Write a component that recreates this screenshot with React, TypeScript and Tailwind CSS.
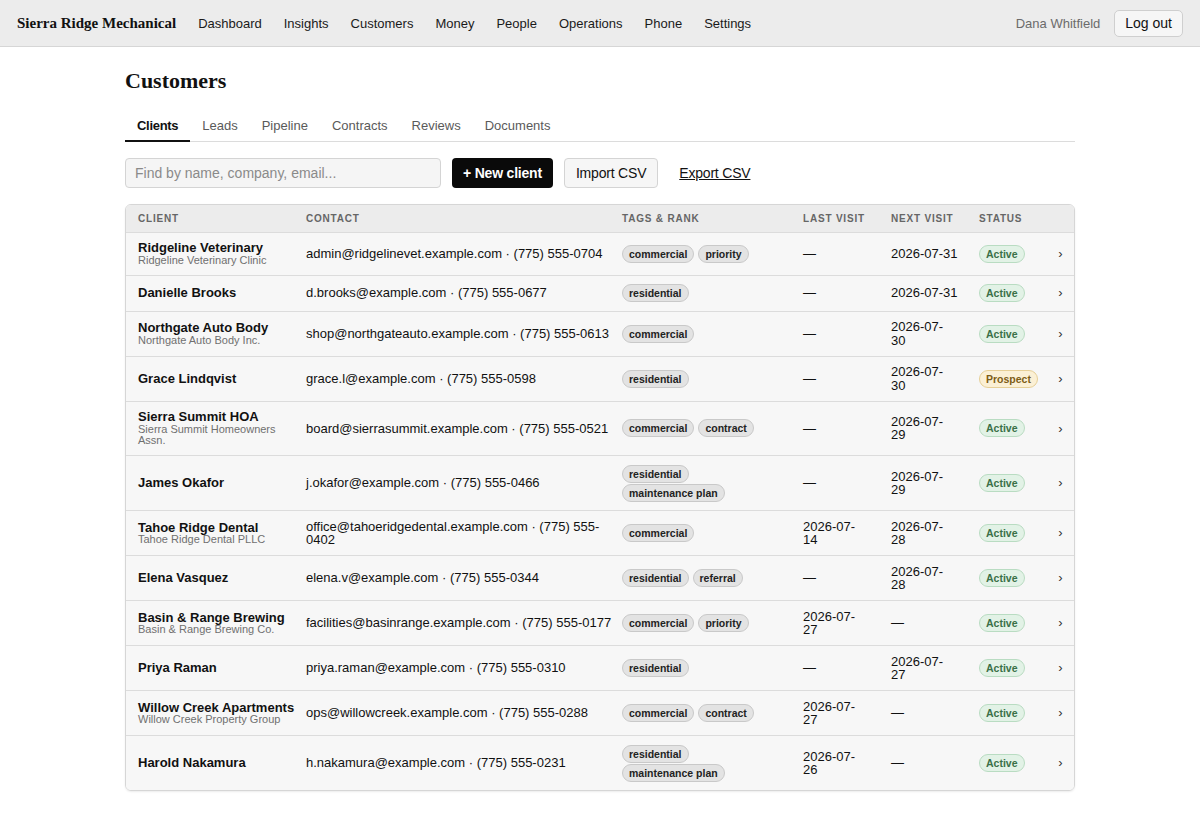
import React from "react";

type Row = {
  name: string;
  company?: string[];
  contact: string[];
  tags: string[];
  last: string[];
  next: string[];
  status: "Active" | "Prospect";
};

const rows: Row[] = [
  { name: "Ridgeline Veterinary", company: ["Ridgeline Veterinary Clinic"], contact: ["admin@ridgelinevet.example.com · (775) 555-0704"], tags: ["commercial", "priority"], last: ["—"], next: ["2026-07-31"], status: "Active" },
  { name: "Danielle Brooks", contact: ["d.brooks@example.com · (775) 555-0677"], tags: ["residential"], last: ["—"], next: ["2026-07-31"], status: "Active" },
  { name: "Northgate Auto Body", company: ["Northgate Auto Body Inc."], contact: ["shop@northgateauto.example.com · (775) 555-0613"], tags: ["commercial"], last: ["—"], next: ["2026-07-", "30"], status: "Active" },
  { name: "Grace Lindqvist", contact: ["grace.l@example.com · (775) 555-0598"], tags: ["residential"], last: ["—"], next: ["2026-07-", "30"], status: "Prospect" },
  { name: "Sierra Summit HOA", company: ["Sierra Summit Homeowners", "Assn."], contact: ["board@sierrasummit.example.com · (775) 555-0521"], tags: ["commercial", "contract"], last: ["—"], next: ["2026-07-", "29"], status: "Active" },
  { name: "James Okafor", contact: ["j.okafor@example.com · (775) 555-0466"], tags: ["residential", "maintenance plan"], last: ["—"], next: ["2026-07-", "29"], status: "Active" },
  { name: "Tahoe Ridge Dental", company: ["Tahoe Ridge Dental PLLC"], contact: ["office@tahoeridgedental.example.com · (775) 555-", "0402"], tags: ["commercial"], last: ["2026-07-", "14"], next: ["2026-07-", "28"], status: "Active" },
  { name: "Elena Vasquez", contact: ["elena.v@example.com · (775) 555-0344"], tags: ["residential", "referral"], last: ["—"], next: ["2026-07-", "28"], status: "Active" },
  { name: "Basin & Range Brewing", company: ["Basin & Range Brewing Co."], contact: ["facilities@basinrange.example.com · (775) 555-0177"], tags: ["commercial", "priority"], last: ["2026-07-", "27"], next: ["—"], status: "Active" },
  { name: "Priya Raman", contact: ["priya.raman@example.com · (775) 555-0310"], tags: ["residential"], last: ["—"], next: ["2026-07-", "27"], status: "Active" },
  { name: "Willow Creek Apartments", company: ["Willow Creek Property Group"], contact: ["ops@willowcreek.example.com · (775) 555-0288"], tags: ["commercial", "contract"], last: ["2026-07-", "27"], next: ["—"], status: "Active" },
  { name: "Harold Nakamura", contact: ["h.nakamura@example.com · (775) 555-0231"], tags: ["residential", "maintenance plan"], last: ["2026-07-", "26"], next: ["—"], status: "Active" },
];

const nav = ["Dashboard", "Insights", "Customers", "Money", "People", "Operations", "Phone", "Settings"];
const tabs = ["Clients", "Leads", "Pipeline", "Contracts", "Reviews", "Documents"];

function Lines({ lines }: { lines: string[] }) {
  return (
    <div className="whitespace-nowrap">
      {lines.map((l, i) => (
        <div key={i}>{l}</div>
      ))}
    </div>
  );
}

export default function App() {
  return (
    <div className="min-h-[838px] bg-white text-[#1a1a1a] font-['Liberation_Sans',Arial,sans-serif]">
      <header className="h-[47px] bg-[#ececec] border-b border-[#d6d6d6] flex items-center pl-[17px] pr-[17px]">
        <div className="font-['Liberation_Serif',Georgia,serif] font-bold text-[15px] text-[#111]">Sierra Ridge Mechanical</div>
        <nav className="ml-[22px] flex items-center gap-[22px] text-[13px] leading-[18px] pt-[2px] text-[#1a1a1a]">
          {nav.map((n) => (
            <span key={n}>{n}</span>
          ))}
        </nav>
        <div className="ml-auto flex items-center gap-[14px]">
          <span className="text-[13px] pt-[2px] text-[#6b6b6b]">Dana Whitfield</span>
          <button className="h-[27px] px-[10px] rounded-[5px] border border-[#cfcfcf] bg-[#f6f6f6] text-[14px] text-[#111]">Log out</button>
        </div>
      </header>

      <main className="w-[950px] mx-auto">
        <h1 className="mt-[20px] font-['Liberation_Serif',Georgia,serif] font-bold text-[22px] leading-[28px] text-[#111]">Customers</h1>

        <div className="mt-[15px] flex border-b border-[#dcdcdc] text-[13px]">
          {tabs.map((t, i) => (
            <div
              key={t}
              className={
                i === 0
                  ? "px-[12px] pt-[8px] pb-[6px] leading-[16px] border-b-2 border-[#111] text-[#111] font-bold tracking-[-0.3px] -mb-px"
                  : "px-[12px] pt-[8px] pb-[6px] leading-[16px] border-b-2 border-transparent text-[#5a5a5a] -mb-px"
              }
            >
              {t}
            </div>
          ))}
        </div>

        <div className="mt-[16px] flex items-center gap-[11px]">
          <input
            className="w-[316px] h-[30px] px-[9px] rounded-[4px] border border-[#d4d4d4] bg-[#f5f5f5] text-[14px] placeholder:text-[#8a8a8a] outline-none"
            placeholder="Find by name, company, email..."
          />
          <button className="h-[30px] px-[11px] rounded-[4px] bg-[#0a0a0a] text-white text-[14px] font-bold tracking-[-0.2px]">+ New client</button>
          <button className="h-[30px] px-[11px] rounded-[4px] border border-[#d4d4d4] bg-[#f6f6f6] text-[14px] text-[#111] tracking-[-0.2px]">Import CSV</button>
          <a className="px-[10px] text-[14px] text-[#111] underline tracking-[-0.2px]">Export CSV</a>
        </div>

        <div className="mt-[16px] border border-[#d6d6d6] rounded-[6px] overflow-hidden shadow-[0_1px_2px_rgba(0,0,0,0.08)]">
          <table className="w-full table-fixed border-collapse text-[13px] leading-[13.5px]">
            <colgroup>
              <col className="w-[168px]" />
              <col className="w-[316px]" />
              <col className="w-[181px]" />
              <col className="w-[88px]" />
              <col className="w-[88px]" />
              <col className="w-[80px]" />
              <col className="w-[27px]" />
            </colgroup>
            <thead>
              <tr className="bg-[#ececec] h-[27px] text-left text-[10px] font-bold tracking-[0.08em] uppercase text-[#666]">
                <th className="px-[12px] font-bold">Client</th>
                <th className="px-[12px] font-bold">Contact</th>
                <th className="px-[12px] font-bold">Tags &amp; Rank</th>
                <th className="px-[12px] font-bold">Last visit</th>
                <th className="px-[12px] font-bold">Next visit</th>
                <th className="px-[12px] font-bold">Status</th>
                <th></th>
              </tr>
            </thead>
            <tbody>
              {rows.map((r) => (
                <tr key={r.name} className="bg-[#f7f7f7] border-t border-[#dcdcdc] align-middle">
                  <td className="pl-[12px] pr-[4px] py-[8.5px]">
                    <div className="font-bold whitespace-nowrap text-[#111]">{r.name}</div>
                    {r.company && (
                      <div className="text-[11px] leading-[11.5px] text-[#707070]">
                        {r.company.map((c, i) => (
                          <div key={i} className="whitespace-nowrap">{c}</div>
                        ))}
                      </div>
                    )}
                  </td>
                  <td className="px-[12px] py-[8.5px] text-[#111]">
                    <Lines lines={r.contact} />
                  </td>
                  <td className="px-[12px] py-[8.5px]">
                    <div className="flex flex-wrap gap-x-[4px] gap-y-[1px]">
                      {r.tags.map((t) => (
                        <span
                          key={t}
                          className="h-[18px] px-[6px] rounded-full border border-[#c9c9c9] bg-[#e3e3e3] text-[10.5px] font-bold leading-[16px] text-[#222] whitespace-nowrap"
                        >
                          {t}
                        </span>
                      ))}
                    </div>
                  </td>
                  <td className="px-[12px] py-[8.5px] text-[#111]">
                    <Lines lines={r.last} />
                  </td>
                  <td className="px-[12px] py-[8.5px] text-[#111]">
                    <Lines lines={r.next} />
                  </td>
                  <td className="px-[12px] py-[8.5px]">
                    {r.status === "Active" ? (
                      <span className="inline-block h-[18px] px-[6px] rounded-full border border-[#b9dcc2] bg-[#e2f2e6] text-[10.5px] font-bold leading-[16px] text-[#3b7048]">Active</span>
                    ) : (
                      <span className="inline-block h-[18px] px-[6px] rounded-full border border-[#e6cf96] bg-[#fbf0d5] text-[10.5px] font-bold leading-[16px] text-[#7d5d16]">Prospect</span>
                    )}
                  </td>
                  <td className="py-[8.5px] text-center text-[#333] text-[13px]">›</td>
                </tr>
              ))}
            </tbody>
          </table>
        </div>
      </main>
    </div>
  );
}
